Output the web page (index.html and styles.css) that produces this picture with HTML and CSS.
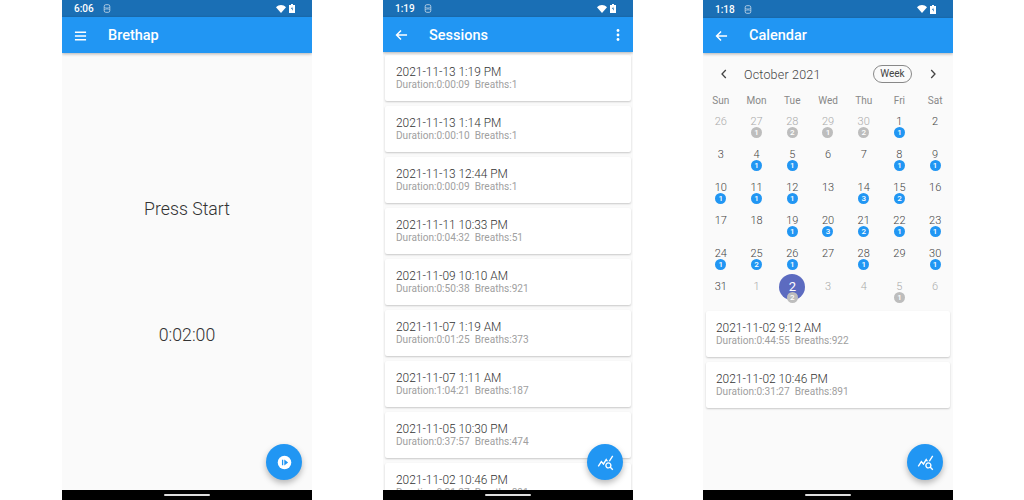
FILE: index.html
```html
<!DOCTYPE html>
<html lang="en">
<head>
    <meta charset="UTF-8">
    <title>Brethap</title>
    <link rel="stylesheet" href="styles.css">
</head>
<body>
    <div class="phone phone-home">
        <div class="status-bar">
            <span class="status-time">6:06</span>
            <svg class="status-sim" viewBox="0 0 8 9"><rect x="1.2" y="0.7" width="5.6" height="7.6" rx="1.6" fill="none" stroke="#b8d0e6" stroke-width="0.9"/><path d="M1.2 3.2C3 4.4 5 4.4 6.8 3.2M1.2 5.8C3 4.6 5 4.6 6.8 5.8" fill="none" stroke="#b8d0e6" stroke-width="0.8"/></svg>
            <span class="status-right">
                <svg class="status-wifi" viewBox="0 0 10 8"><path d="M0 2.2C3-.6 7-.6 10 2.2L5 8z" fill="#fff"/></svg>
                <svg class="status-batt" viewBox="0 0 6 9"><path d="M2 0h2v1h2v8H0V1h2z" fill="#fff"/><path d="M3.4 2.5 2 5h1v1.8L4.2 4.4h-1z" fill="#1a6fb5"/></svg>
            </span>
        </div>
        <div class="app-bar">
            <svg class="bar-icon" viewBox="0 0 14 12"><path d="M1 2h12M1 6h12M1 10h12" stroke="#fff" stroke-width="1.6"/></svg>
            <span class="bar-title">Brethap</span>
        </div>
        <div class="home-body">
            <div class="home-text home-press">Press Start</div>
            <div class="home-text home-timer">0:02:00</div>
        </div>
        <div class="fab">
            <svg viewBox="0 0 16 16" class="fab-icon"><circle cx="8" cy="8" r="6.4" fill="#fff"/><path d="M5.6 5.3h1.2v5.4H5.6zM7.8 5.2 11.4 8l-3.6 2.8z" fill="#2196f3"/></svg>
        </div>
        <div class="nav-bar"><span class="nav-pill"></span></div>
    </div>

    <div class="phone phone-sessions">
        <div class="status-bar">
            <span class="status-time">1:19</span>
            <svg class="status-sim" viewBox="0 0 8 9"><rect x="1.2" y="0.7" width="5.6" height="7.6" rx="1.6" fill="none" stroke="#b8d0e6" stroke-width="0.9"/><path d="M1.2 3.2C3 4.4 5 4.4 6.8 3.2M1.2 5.8C3 4.6 5 4.6 6.8 5.8" fill="none" stroke="#b8d0e6" stroke-width="0.8"/></svg>
            <span class="status-right">
                <svg class="status-wifi" viewBox="0 0 10 8"><path d="M0 2.2C3-.6 7-.6 10 2.2L5 8z" fill="#fff"/></svg>
                <svg class="status-batt" viewBox="0 0 6 9"><path d="M2 0h2v1h2v8H0V1h2z" fill="#fff"/><path d="M3.4 2.5 2 5h1v1.8L4.2 4.4h-1z" fill="#1a6fb5"/></svg>
            </span>
        </div>
        <div class="app-bar">
            <svg class="bar-icon" viewBox="0 0 14 12"><path d="M13 6H2M6.5 1.2 1.7 6l4.8 4.8" fill="none" stroke="#fff" stroke-width="1.6"/></svg>
            <span class="bar-title">Sessions</span>
            <svg class="bar-more" viewBox="0 0 4 14"><circle cx="2" cy="2.5" r="1.4" fill="#fff"/><circle cx="2" cy="7" r="1.4" fill="#fff"/><circle cx="2" cy="11.5" r="1.4" fill="#fff"/></svg>
        </div>
        <div class="session-list">
            <div class="card"><div class="card-title">2021-11-13 1:19 PM</div><div class="card-sub">Duration:0:00:09&nbsp;&nbsp;Breaths:1</div></div>
            <div class="card"><div class="card-title">2021-11-13 1:14 PM</div><div class="card-sub">Duration:0:00:10&nbsp;&nbsp;Breaths:1</div></div>
            <div class="card"><div class="card-title">2021-11-13 12:44 PM</div><div class="card-sub">Duration:0:00:09&nbsp;&nbsp;Breaths:1</div></div>
            <div class="card"><div class="card-title">2021-11-11 10:33 PM</div><div class="card-sub">Duration:0:04:32&nbsp;&nbsp;Breaths:51</div></div>
            <div class="card"><div class="card-title">2021-11-09 10:10 AM</div><div class="card-sub">Duration:0:50:38&nbsp;&nbsp;Breaths:921</div></div>
            <div class="card"><div class="card-title">2021-11-07 1:19 AM</div><div class="card-sub">Duration:0:01:25&nbsp;&nbsp;Breaths:373</div></div>
            <div class="card"><div class="card-title">2021-11-07 1:11 AM</div><div class="card-sub">Duration:1:04:21&nbsp;&nbsp;Breaths:187</div></div>
            <div class="card"><div class="card-title">2021-11-05 10:30 PM</div><div class="card-sub">Duration:0:37:57&nbsp;&nbsp;Breaths:474</div></div>
            <div class="card"><div class="card-title">2021-11-02 10:46 PM</div><div class="card-sub">Duration:0:31:27&nbsp;&nbsp;Breaths:891</div></div>
        </div>
        <div class="fab">
            <svg viewBox="0 0 24 24" class="fab-icon"><path fill="#fff" d="M19.88 18.47c.44-.7.7-1.51.7-2.39 0-2.49-2.01-4.5-4.5-4.5s-4.5 2.01-4.5 4.5 2.01 4.5 4.49 4.5c.88 0 1.7-.26 2.39-.7L21.58 23 23 21.59l-3.12-3.12zm-3.8.11c-1.38 0-2.5-1.12-2.5-2.5s1.12-2.5 2.5-2.5 2.5 1.12 2.5 2.5-1.12 2.5-2.5 2.5zm-.36-8.5c-.74.02-1.45.18-2.1.45l-.55-.83-3.8 6.18-3.01-3.52-3.63 5.81L1 17l5-8 3 3.5L13 6l2.72 4.08zm2.59.5c-.64-.28-1.33-.45-2.05-.49L21.38 2 23 3.18l-4.69 7.41z"/></svg>
        </div>
        <div class="nav-bar"><span class="nav-pill"></span></div>
    </div>

    <div class="phone phone-calendar">
        <div class="status-bar">
            <span class="status-time">1:18</span>
            <svg class="status-sim" viewBox="0 0 8 9"><rect x="1.2" y="0.7" width="5.6" height="7.6" rx="1.6" fill="none" stroke="#b8d0e6" stroke-width="0.9"/><path d="M1.2 3.2C3 4.4 5 4.4 6.8 3.2M1.2 5.8C3 4.6 5 4.6 6.8 5.8" fill="none" stroke="#b8d0e6" stroke-width="0.8"/></svg>
            <span class="status-right">
                <svg class="status-wifi" viewBox="0 0 10 8"><path d="M0 2.2C3-.6 7-.6 10 2.2L5 8z" fill="#fff"/></svg>
                <svg class="status-batt" viewBox="0 0 6 9"><path d="M2 0h2v1h2v8H0V1h2z" fill="#fff"/><path d="M3.4 2.5 2 5h1v1.8L4.2 4.4h-1z" fill="#1a6fb5"/></svg>
            </span>
        </div>
        <div class="app-bar">
            <svg class="bar-icon" viewBox="0 0 14 12"><path d="M13 6H2M6.5 1.2 1.7 6l4.8 4.8" fill="none" stroke="#fff" stroke-width="1.6"/></svg>
            <span class="bar-title">Calendar</span>
        </div>
        <div class="cal-head">
            <svg class="cal-arrow" viewBox="0 0 6 10"><path d="M4.8 1 1 5l3.8 4" fill="none" stroke="#444" stroke-width="1.3"/></svg>
            <span class="cal-month">October 2021</span>
            <span class="cal-format">Week</span>
            <svg class="cal-arrow" viewBox="0 0 6 10"><path d="M1.2 1 5 5 1.2 9" fill="none" stroke="#444" stroke-width="1.3"/></svg>
        </div>
        <div class="cal-grid cal-week">
            <span>Sun</span><span>Mon</span><span>Tue</span><span>Wed</span><span>Thu</span><span>Fri</span><span>Sat</span>
        </div>
        <div class="cal-grid cal-days">
            <div class="day muted">26</div>
            <div class="day muted">27<b class="mark grey">1</b></div>
            <div class="day muted">28<b class="mark grey">2</b></div>
            <div class="day muted">29<b class="mark grey">1</b></div>
            <div class="day muted">30<b class="mark grey">2</b></div>
            <div class="day">1<b class="mark">1</b></div>
            <div class="day">2</div>

            <div class="day">3</div>
            <div class="day">4<b class="mark">1</b></div>
            <div class="day">5<b class="mark">1</b></div>
            <div class="day">6</div>
            <div class="day">7</div>
            <div class="day">8<b class="mark">1</b></div>
            <div class="day">9<b class="mark">1</b></div>

            <div class="day">10<b class="mark">1</b></div>
            <div class="day">11<b class="mark">1</b></div>
            <div class="day">12<b class="mark">1</b></div>
            <div class="day">13</div>
            <div class="day">14<b class="mark">3</b></div>
            <div class="day">15<b class="mark">2</b></div>
            <div class="day">16</div>

            <div class="day">17</div>
            <div class="day">18</div>
            <div class="day">19<b class="mark">1</b></div>
            <div class="day">20<b class="mark">3</b></div>
            <div class="day">21<b class="mark">2</b></div>
            <div class="day">22<b class="mark">1</b></div>
            <div class="day">23<b class="mark">1</b></div>

            <div class="day">24<b class="mark">1</b></div>
            <div class="day">25<b class="mark">2</b></div>
            <div class="day">26<b class="mark">1</b></div>
            <div class="day">27</div>
            <div class="day">28<b class="mark">1</b></div>
            <div class="day">29</div>
            <div class="day">30<b class="mark">1</b></div>

            <div class="day">31</div>
            <div class="day muted">1</div>
            <div class="day selected"><i class="sel-circle"></i><span class="sel-num">2</span><b class="mark grey">2</b></div>
            <div class="day muted">3</div>
            <div class="day muted">4</div>
            <div class="day muted">5<b class="mark grey">1</b></div>
            <div class="day muted">6</div>
        </div>
        <div class="cal-list">
            <div class="card"><div class="card-title">2021-11-02 9:12 AM</div><div class="card-sub">Duration:0:44:55&nbsp;&nbsp;Breaths:922</div></div>
            <div class="card"><div class="card-title">2021-11-02 10:46 PM</div><div class="card-sub">Duration:0:31:27&nbsp;&nbsp;Breaths:891</div></div>
        </div>
        <div class="fab">
            <svg viewBox="0 0 24 24" class="fab-icon"><path fill="#fff" d="M19.88 18.47c.44-.7.7-1.51.7-2.39 0-2.49-2.01-4.5-4.5-4.5s-4.5 2.01-4.5 4.5 2.01 4.5 4.49 4.5c.88 0 1.7-.26 2.39-.7L21.58 23 23 21.59l-3.12-3.12zm-3.8.11c-1.38 0-2.5-1.12-2.5-2.5s1.12-2.5 2.5-2.5 2.5 1.12 2.5 2.5-1.12 2.5-2.5 2.5zm-.36-8.5c-.74.02-1.45.18-2.1.45l-.55-.83-3.8 6.18-3.01-3.52-3.63 5.81L1 17l5-8 3 3.5L13 6l2.72 4.08zm2.59.5c-.64-.28-1.33-.45-2.05-.49L21.38 2 23 3.18l-4.69 7.41z"/></svg>
        </div>
        <div class="nav-bar"><span class="nav-pill"></span></div>
    </div>
</body>
</html>
```

FILE: styles.css
```css
body {
    margin: 0;
    height: 500px;
    overflow: hidden;
    background-color: #fff;
    font-family: 'Roboto', sans-serif;
    display: flex;
    padding-left: 62px;
}

.phone {
    position: relative;
    width: 250px;
    height: 500px;
    background-color: #fafafa;
    display: flex;
    flex-direction: column;
    overflow: hidden;
    flex: none;
}

.phone-sessions {
    margin-left: 71px;
}

.phone-calendar {
    margin-left: 70px;
}

.status-bar {
    height: 17px;
    background-color: #1a6fb5;
    display: flex;
    align-items: center;
    padding: 0 17px 0 12px;
    color: #fff;
    font-size: 10px;
    font-weight: 500;
    flex: none;
}

.phone-calendar .status-bar {
    height: 18px;
}

.status-sim {
    width: 8px;
    height: 9px;
    margin-left: 9px;
}

.status-right {
    margin-left: auto;
    display: flex;
    align-items: center;
    gap: 3px;
}

.status-wifi {
    width: 10px;
    height: 8px;
}

.status-batt {
    width: 6px;
    height: 9px;
}

.app-bar {
    position: relative;
    z-index: 2;
    box-sizing: border-box;
    height: 36px;
    background-color: #2196f3;
    box-shadow: 0 1px 3px rgba(0, 0, 0, 0.3);
    display: flex;
    align-items: center;
    padding: 1px 11px 0 12px;
    color: #fff;
    flex: none;
}

.phone-sessions .app-bar,
.phone-calendar .app-bar {
    height: 35px;
}

.phone-calendar .app-bar {
    padding-top: 0;
}

.bar-icon {
    width: 13px;
    height: 12px;
}

.bar-title {
    margin-left: 21px;
    font-size: 14.5px;
    font-weight: 500;
}

.bar-more {
    width: 4px;
    height: 14px;
    margin-left: auto;
    margin-right: 2px;
}

.home-body {
    flex: 1;
    display: flex;
    flex-direction: column;
    align-items: center;
    color: #333;
}

.home-text {
    font-size: 17.7px;
    font-weight: 300;
    line-height: 22px;
}

.home-press {
    margin-top: 145px;
}

.home-timer {
    margin-top: 104px;
}

.fab {
    position: absolute;
    right: 10px;
    bottom: 20px;
    width: 36px;
    height: 36px;
    border-radius: 50%;
    background-color: #2196f3;
    box-shadow: 0 3px 6px rgba(0, 0, 0, 0.28);
    display: flex;
    align-items: center;
    justify-content: center;
    z-index: 3;
}

.fab-icon {
    width: 17px;
    height: 17px;
}

.nav-bar {
    position: absolute;
    left: 0;
    right: 0;
    bottom: 0;
    height: 10px;
    background-color: #000;
    display: flex;
    align-items: center;
    justify-content: center;
    z-index: 4;
}

.nav-pill {
    width: 46px;
    height: 2px;
    border-radius: 1px;
    background-color: #ddd;
}

.session-list {
    padding: 3px 2px 0;
    display: flex;
    flex-direction: column;
    gap: 5px;
}

.card {
    height: 46px;
    flex: none;
    box-sizing: border-box;
    background-color: #fff;
    border-radius: 2px;
    box-shadow: 0 1px 2px rgba(0, 0, 0, 0.2);
    padding: 10px 10px 0 11px;
}

.cal-list .card {
    padding-left: 10px;
}

.card-title {
    font-size: 11.9px;
    font-weight: 300;
    line-height: 14px;
    color: #333;
}

.card-sub {
    font-size: 10.1px;
    line-height: 11px;
    color: #a0a0a0;
}

.cal-head {
    height: 42px;
    flex: none;
    display: flex;
    align-items: center;
    padding: 0 17px 0 18px;
    color: #444;
}

.cal-arrow {
    width: 6px;
    height: 10px;
    flex: none;
}

.cal-month {
    margin-left: 17px;
    font-size: 12.5px;
    font-weight: 300;
    letter-spacing: 0.2px;
}

.cal-format {
    margin-left: auto;
    margin-right: 18px;
    width: 39px;
    height: 18px;
    box-sizing: border-box;
    border: 1px solid #888;
    border-radius: 9px;
    font-size: 10px;
    line-height: 16px;
    text-align: center;
}

.cal-grid {
    display: grid;
    grid-template-columns: repeat(7, 1fr);
    text-align: center;
}

.cal-week {
    height: 17px;
    padding-top: 1px;
    box-sizing: border-box;
    font-size: 10px;
    line-height: 10px;
    color: #888;
    flex: none;
}

.cal-days {
    grid-auto-rows: 33px;
    flex: none;
}

.day {
    position: relative;
    font-size: 11px;
    line-height: 13px;
    padding-top: 3px;
    color: #444;
    font-weight: 300;
}

.day.muted {
    color: #aaa;
}

.mark {
    position: absolute;
    left: 50%;
    top: 15px;
    width: 11px;
    height: 11px;
    margin-left: -5.5px;
    border-radius: 50%;
    background-color: #2196f3;
    color: #fff;
    font-size: 8px;
    font-weight: 500;
    line-height: 11px;
}

.mark.grey {
    background-color: #bdbdbd;
}

.sel-circle {
    position: absolute;
    left: 50%;
    top: -3px;
    width: 26px;
    height: 26px;
    margin-left: -13px;
    border-radius: 50%;
    background-color: #5c6bc0;
}

.sel-num {
    position: relative;
    color: #fff;
    font-size: 13px;
    font-weight: 400;
}

.cal-list {
    padding: 1px 3px 0;
    display: flex;
    flex-direction: column;
    gap: 5px;
}
```
